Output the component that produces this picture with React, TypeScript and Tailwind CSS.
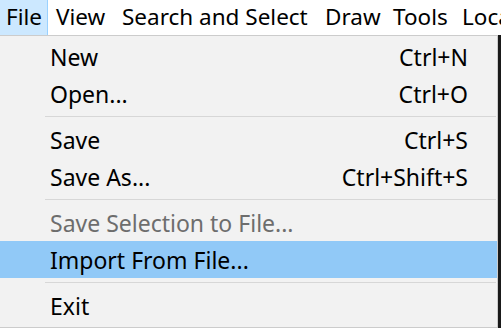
const bar = [
  { label: "File", w: "w-[48px]", pl: "pl-[6px]", active: true },
  { label: "View", w: "w-[66px]", pl: "pl-[8px]" },
  { label: "Search and Select", w: "w-[204px]", pl: "pl-[8px]" },
  { label: "Draw", w: "w-[68px]", pl: "pl-[7px]" },
  { label: "Tools", w: "w-[69px]", pl: "pl-[7px]" },
  { label: "Local", w: "w-[80px]", pl: "pl-[7px]" },
];

type Item =
  | { kind: "item"; label: string; keys?: string; disabled?: boolean; hot?: boolean }
  | { kind: "sep" };

const items: Item[] = [
  { kind: "item", label: "New", keys: "Ctrl+N" },
  { kind: "item", label: "Open...", keys: "Ctrl+O" },
  { kind: "sep" },
  { kind: "item", label: "Save", keys: "Ctrl+S" },
  { kind: "item", label: "Save As...", keys: "Ctrl+Shift+S" },
  { kind: "sep" },
  { kind: "item", label: "Save Selection to File...", disabled: true },
  { kind: "item", label: "Import From File...", hot: true },
  { kind: "sep" },
  { kind: "item", label: "Exit" },
];

export default function App() {
  return (
    <div
      className="w-[501px] h-[328px] overflow-hidden bg-white flex flex-col text-black"
      style={{ fontFamily: '"Noto Sans", "Open Sans", sans-serif' }}
    >
      {/* menu bar */}
      <div className="flex h-[35px] shrink-0 bg-white overflow-hidden">
        {bar.map((b) => (
          <div
            key={b.label}
            className={`${b.w} ${b.pl} shrink-0 h-[35px] flex items-center text-[22.5px] leading-none whitespace-nowrap ${
              b.active ? "bg-[#cce8ff] border-r border-[#99d1ff]" : ""
            }`}
          >
            {b.label}
          </div>
        ))}
      </div>

      <div className="flex flex-1 min-h-0">
        {/* dropdown */}
        <div className="w-[498px] shrink-0 h-[293px] bg-[#f2f2f2] border-t border-r border-b border-[#cccccc] pt-[2px] flex flex-col">
          {items.map((it, i) =>
            it.kind === "sep" ? (
              <div key={i} className="h-[9px] flex items-center pl-[45px] pr-[1px]">
                <div className="h-px w-full bg-[#d7d7d7]" />
              </div>
            ) : (
              <div
                key={i}
                className={`h-[37px] flex items-center justify-between pl-[50px] pr-[29px] text-[23px] leading-none whitespace-nowrap ${
                  it.hot ? "bg-[#91c9f7]" : ""
                } ${it.disabled ? "text-[#6d6d6d]" : "text-black"}`}
              >
                <span className="pt-[2px]">{it.label}</span>
                {it.keys && <span className="pt-[2px]">{it.keys}</span>}
              </div>
            )
          )}
        </div>
        <div className="flex-1 bg-[#1a1a1a]" />
      </div>
    </div>
  );
}
